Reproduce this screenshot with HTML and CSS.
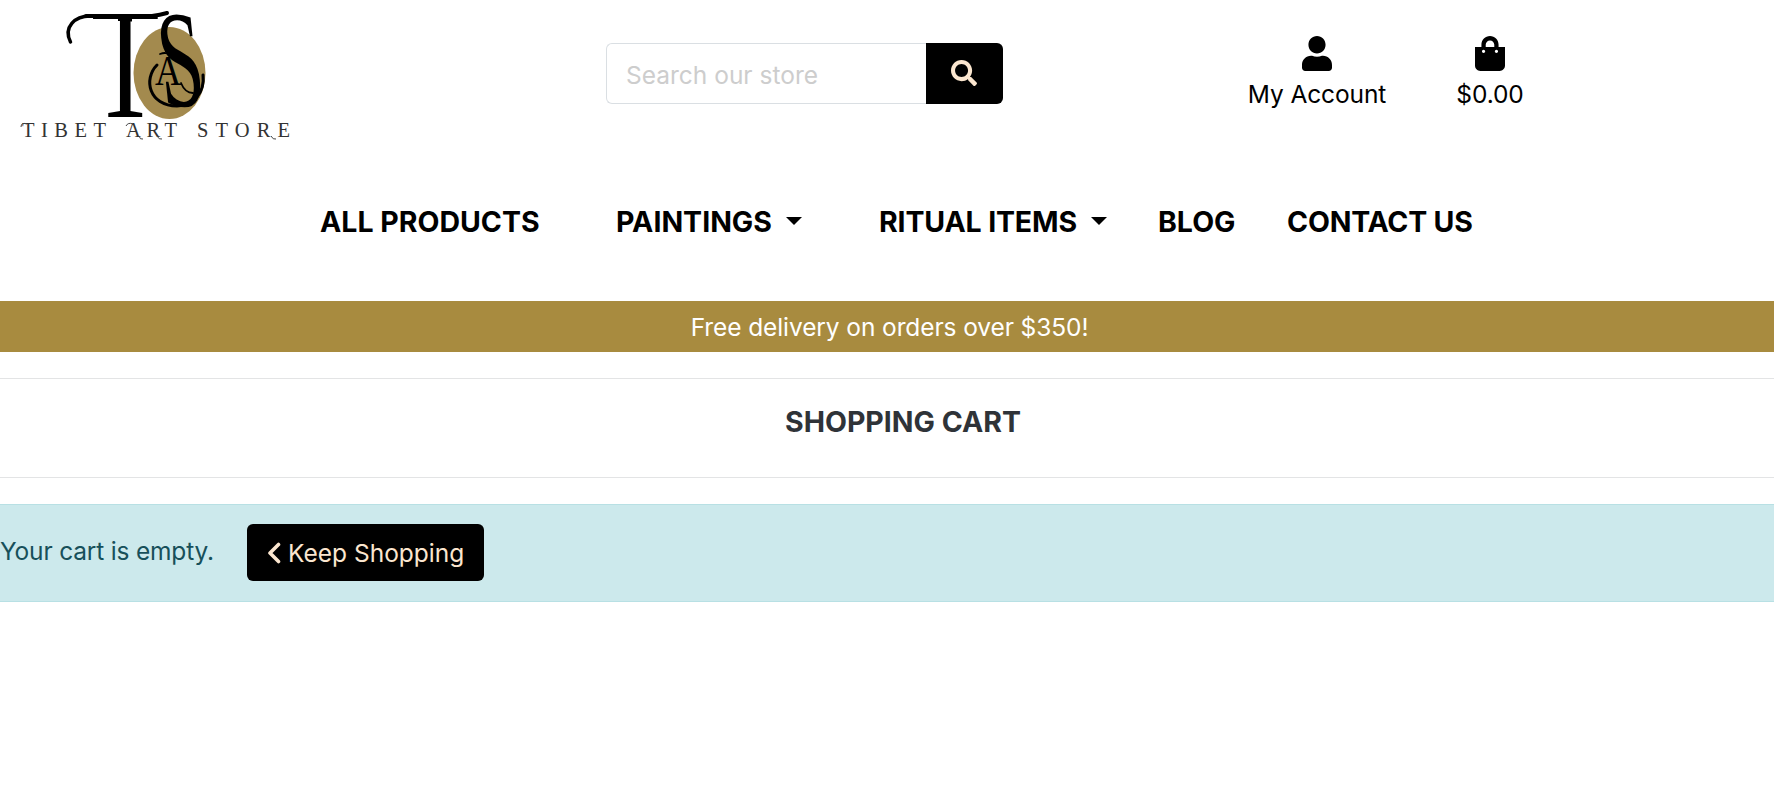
FILE: index.html
```
<!DOCTYPE html>
<html lang="en">
<head>
<meta charset="utf-8">
<title>Tibet Art Store</title>
<link rel="stylesheet" href="styles.css">
</head>
<body>
<header class="header">
  <a class="logo" aria-label="Tibet Art Store">
    <svg width="310" height="150" viewBox="0 0 310 150">
      <clipPath id="tShape"><path d="M80 8H170V19H132V104H160V122H90V104H118V19H80Z"/></clipPath>
      <ellipse cx="169.500" cy="73" rx="36" ry="46" fill="#a38a4e"/>
      <g font-family="Liberation Serif, serif">
        <g clip-path="url(#tShape)"><text transform="translate(91 117) scale(.72 1)" font-size="156">T</text></g>
        <text transform="translate(163 105.500) skewX(6) scale(.58 1)" font-size="138">S</text>
        <text transform="translate(155 85) scale(.85 1)" font-size="43">A</text>
      </g>
      <g fill="none" stroke="#000" stroke-linecap="round">
        <path d="M86 16H152Q160 15 167 13" stroke-width="4"/>
        <path d="M70.500 42C63 27 75 16 90 16" stroke-width="3.500"/>
        <path d="M157 65C143 79 149 106 177 106C194 106 205 92 203 75" stroke-width="3"/>
        <path d="M160 54Q168 51 170 57M181 83Q185 93 193 93" stroke-width="1.800"/>
      </g>
      <g font-family="Liberation Serif, serif" font-size="20.500" fill="#333">
        <text x="22" y="137" textLength="84">TIBET</text>
        <text x="126" y="137" textLength="51">ART</text>
        <text x="197" y="137" textLength="93">STORE</text>
      </g>
      <path d="M21 127Q21 122 27 124M126 126Q128 122 133 124M139 136Q140 140 143 139M157 136Q159 140 162 139M271 136Q273 140 276 139" fill="none" stroke="#444"/>
    </svg>
  </a>
  <form class="search">
    <input class="search-input" type="text" placeholder="Search our store">
    <button class="search-button" type="button" aria-label="Search">
      <svg width="26" height="26" viewBox="0 0 512 512"><path fill="#fbe6cf" d="M505 442.700L405.300 343c-4.500-4.500-10.600-7-17-7H372c27.600-35.300 44-79.700 44-128C416 93.100 322.900 0 208 0S0 93.100 0 208s93.100 208 208 208c48.300 0 92.700-16.400 128-44v16.300c0 6.400 2.500 12.500 7 17l99.700 99.700c9.400 9.400 24.600 9.400 33.900 0l28.300-28.300c9.400-9.400 9.400-24.600.1-34zM208 336c-70.700 0-128-57.200-128-128 0-70.700 57.200-128 128-128 70.700 0 128 57.200 128 128 0 70.700-57.200 128-128 128z"/></svg>
    </button>
  </form>
  <a class="action account">
    <svg width="30" height="35" viewBox="0 0 448 512" preserveAspectRatio="none"><path d="M224 256c70.700 0 128-57.300 128-128S294.700 0 224 0 96 57.300 96 128s57.300 128 128 128zm89.600 32h-16.700c-22.200 10.200-46.900 16-72.900 16s-50.600-5.800-72.900-16h-16.700C60.200 288 0 348.200 0 422.400V464c0 26.500 21.500 48 48 48h352c26.500 0 48-21.500 48-48v-41.600c0-74.200-60.200-134.400-134.400-134.400z"/></svg>
    <span>My Account</span>
  </a>
  <a class="action bag">
    <svg width="30" height="35" viewBox="0 0 448 512" preserveAspectRatio="none"><path d="M352 160v-32C352 57.420 294.579 0 224 0 153.420 0 96 57.420 96 128v32H0v272c0 44.183 35.817 80 80 80h288c44.183 0 80-35.817 80-80V160h-96zm-192-32c0-35.290 28.710-64 64-64s64 28.710 64 64v32H160v-32zm160 120c-13.255 0-24-10.745-24-24s10.745-24 24-24 24 10.745 24 24-10.745 24-24 24zm-192 0c-13.255 0-24-10.745-24-24s10.745-24 24-24 24 10.745 24 24-10.745 24-24 24z"/></svg>
    <span>$0.00</span>
  </a>
</header>
<nav class="nav">
  <a class="nav-item products">ALL PRODUCTS</a>
  <a class="nav-item paintings">PAINTINGS<i class="caret"></i></a>
  <a class="nav-item ritual">RITUAL ITEMS<i class="caret"></i></a>
  <a class="nav-item blog">BLOG</a>
  <a class="nav-item contact">CONTACT US</a>
</nav>
<div class="banner">Free delivery on orders over $350!</div>
<main>
  <section class="title"><h1>SHOPPING CART</h1></section>
  <div class="alert">
    <span class="alert-text">Your cart is empty.</span>
    <a class="keep"><svg width="14" height="22" viewBox="0 0 14 22"><path d="M11.500 2.500L3 11l8.500 8.500" fill="none" stroke="#fbe6cf" stroke-width="3.600" stroke-linecap="round" stroke-linejoin="round"/></svg><span>Keep Shopping</span></a>
  </div>
</main>
</body>
</html>
```
FILE: styles.css
```
* { box-sizing: border-box; }
body {
  margin: 0;
  background: #fff;
  color: #000;
  font: 24.5px/37px Inter, sans-serif;
  letter-spacing: -.1px;
  white-space: nowrap;
  overflow: hidden;
}
.header { display: flex; align-items: flex-start; height: 190px; }
.logo { width: 310px; height: 150px; }
.logo svg { display: block; }
.search { display: flex; width: 397px; height: 61px; margin: 43px 0 0 296px; }
.search-input {
  width: 320px;
  padding: 3px 19px 0;
  border: 1px solid #dadfe3;
  border-right: 0;
  border-radius: 6px 0 0 6px;
  background: #fff;
  font: 24.5px/37px Inter, sans-serif;
  letter-spacing: 0;
}
.search-input::placeholder { color: #cdcdcd; opacity: 1; }
.search-button {
  display: flex;
  align-items: center;
  justify-content: center;
  width: 77px;
  padding: 0 1px 1px 0;
  border: 0;
  border-radius: 0 6px 6px 0;
  background: #000;
}
.action { display: flex; flex-direction: column; align-items: center; gap: 5px; margin-top: 36px; }
.account { width: 138px; margin-left: 245px; }
.bag { width: 70px; margin-left: 69px; }
.nav {
  display: flex;
  height: 111px;
  padding: 12px 0 0 320px;
  font-size: 28.5px;
  line-height: 40px;
  font-weight: 700;
}
.nav-item { display: flex; flex: none; justify-content: space-between; letter-spacing: 0; }
.products { width: 296px; }
.paintings { width: 186px; margin-right: 77px; }
.ritual { width: 228px; margin-right: 51px; letter-spacing: -.15px; }
.blog { width: 129px; }
.contact { letter-spacing: -.2px; }
.caret {
  width: 16px;
  height: 8px;
  margin-top: 15px;
  background: #000;
  clip-path: polygon(0 0, 100% 0, 50% 100%);
}
.banner { height: 51px; padding: 8px 0 0 5px; background: #a88b3f; color: #fff; text-align: center; }
.title {
  height: 100px;
  margin: 26px 0;
  padding: 23px 0 0 32px;
  border: solid #e3e4e5;
  border-width: 1px 0;
  text-align: center;
}
.title h1 { margin: 0; font-size: 28.5px; line-height: 40px; letter-spacing: 0; color: #2f3338; }
.alert {
  display: flex;
  align-items: flex-start;
  height: 98px;
  padding-top: 19px;
  border: solid #b8e0e4;
  border-width: 1px 0;
  background: #cce9ec;
  color: #17505a;
}
.alert-text { width: 247px; padding-top: 9px; letter-spacing: -.18px; }
.keep {
  display: flex;
  align-items: center;
  gap: 7px;
  width: 237px;
  height: 57px;
  padding: 1px 0 0 20px;
  border-radius: 6px;
  background: #000;
  color: #fbe6cf;
  letter-spacing: 0;
}
.keep svg { flex: none; }
```
